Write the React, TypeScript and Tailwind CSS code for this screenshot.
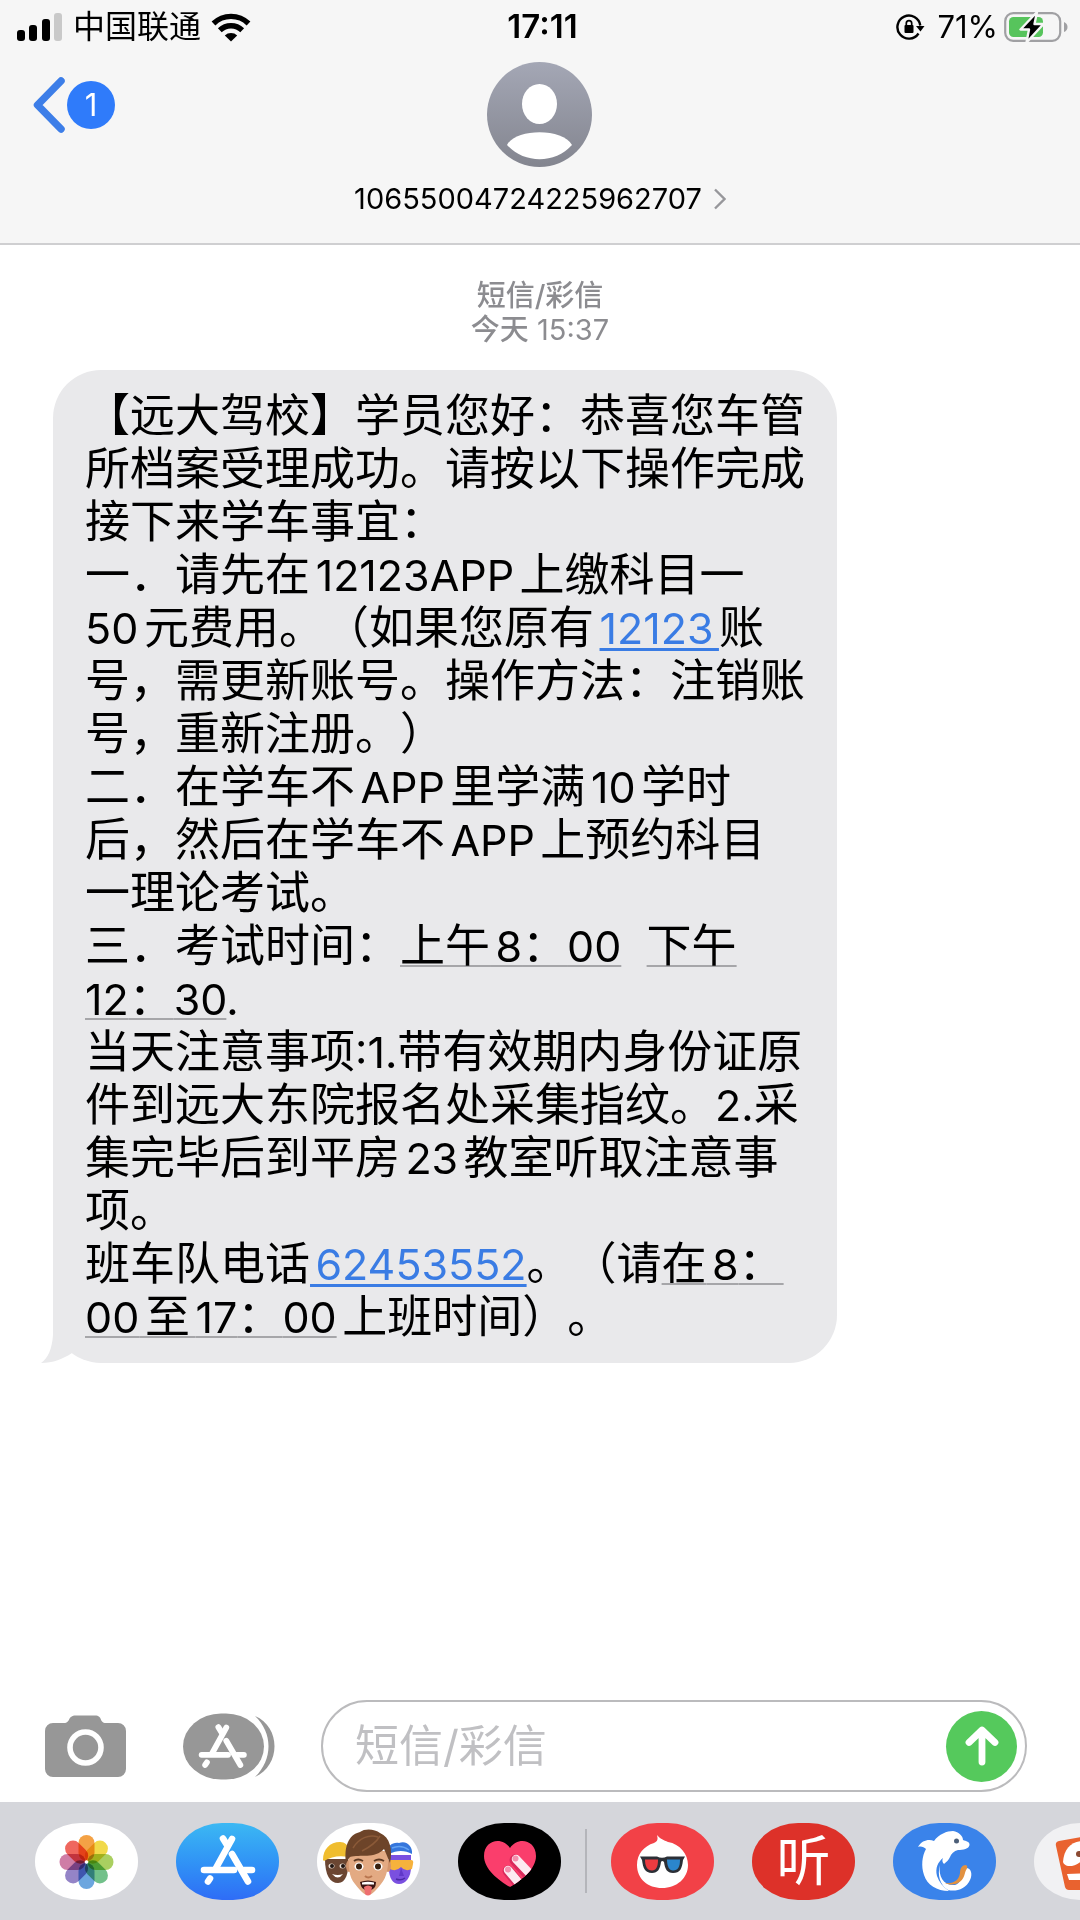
import type { ReactNode } from "react";

const PETALS = [
	"#f39a35",
	"#f0d63a",
	"#a3cb52",
	"#66bc80",
	"#5f9fdd",
	"#8b79c2",
	"#cb729f",
	"#ee5a50",
];

function SignalIcon() {
	return (
		<svg width="46" height="30" viewBox="0 0 46 30">
			<rect x="0" y="18" width="8" height="11" rx="3" />
			<rect x="12" y="13" width="8" height="16" rx="3" />
			<rect x="25" y="7" width="8" height="22" rx="3" />
			<rect x="37" y="1" width="8" height="28" rx="3" fill="#c9c9c9" />
		</svg>
	);
}

function WifiIcon() {
	return (
		<svg width="40" height="30" viewBox="0 0 40 30" fill="none" stroke="#000" strokeWidth="5.4">
			<path d="M2.5 11.5 A25 25 0 0 1 37.500 11.500" />
			<path d="M8.800 18.300 A16 16 0 0 1 31.200 18.300" />
			<path d="M20 29.500 L13.800 23.500 A9 9 0 0 1 26.200 23.500 Z" fill="#000" stroke="none" />
		</svg>
	);
}

function LockRotationIcon() {
	return (
		<svg width="29" height="28" viewBox="0 0 29 28" fill="none" stroke="#000" strokeWidth="2.4">
			<path d="M24.300 12.500 A11.500 11.500 0 1 0 22.500 20.500" />
			<path d="M20 13 L28.500 13 L24.500 18.500 Z" fill="#000" stroke="none" />
			<rect x="8.500" y="12" width="9" height="8" rx="1" fill="#000" stroke="none" />
			<path d="M10.300 12.500 V10.300 a2.700 2.700 0 0 1 5.400 0 V12.500" strokeWidth="1.700" />
		</svg>
	);
}

function BatteryIcon() {
	return (
		<svg width="64" height="32" viewBox="0 0 64 32">
			<rect x="1.200" y="2.200" width="55" height="27.600" rx="8" fill="none" stroke="#a0a0a3" strokeWidth="2.200" />
			<rect x="5" y="6" width="34" height="20" rx="4.500" fill="#57c45c" />
			<path d="M60 11 q3.500 1.500 3.500 5 t-3.500 5 Z" fill="#a0a0a3" />
			<path
				d="M33 1 L16.500 18.500 H25 L22.500 31.500 L39.500 13 H30.500 Z"
				fill="#000"
				stroke="#f6f6f6"
				strokeWidth="2.400"
				strokeLinejoin="round"
			/>
		</svg>
	);
}

function AvatarIcon() {
	return (
		<svg width="105" height="105" viewBox="0 0 105 105">
			<defs>
				<linearGradient id="avatar" x1="0" y1="0" x2="0" y2="1">
					<stop offset="0" stopColor="#a4a7b5" />
					<stop offset="1" stopColor="#83858f" />
				</linearGradient>
			</defs>
			<circle cx="52.500" cy="52.500" r="52.500" fill="url(#avatar)" />
			<ellipse cx="52.500" cy="42" rx="17.500" ry="20" fill="#fff" />
			<path d="M20 83 C29 66 76 66 85 83 C68 102 37 102 20 83 Z" fill="#fff" />
		</svg>
	);
}

function CameraIcon() {
	return (
		<svg width="81" height="63" viewBox="0 0 81 63">
			<path
				d="M8 8 H19 C26 8 22 0.500 31 0.500 H50 C58 0.500 54 8 61 8 H73 a8 8 0 0 1 8 8 V54 a8 8 0 0 1 -8 8 H8 a8 8 0 0 1 -8 -8 V16 a8 8 0 0 1 8 -8 Z"
				fill="#979797"
			/>
			<circle cx="40.500" cy="32.500" r="15.500" fill="none" stroke="#fff" strokeWidth="5.600" />
		</svg>
	);
}

function AppStoreMark() {
	return (
		<g fill="none" stroke="#fff" strokeWidth="6.600" strokeLinecap="round">
			<path d="M56 16 L40 45" />
			<path d="M47 15.500 L51 22" />
			<path d="M56 31 L72 58.500" />
			<path d="M28 47 H58" />
			<path d="M68 47 H76" />
			<path d="M34 55.500 L32 58.500" />
		</g>
	);
}

function AppDrawerIcon() {
	return (
		<svg width="92" height="67" viewBox="0 0 92 67">
			<path d="M72 3 C98 14 98 52 72 64 C90 46 90 20 72 3 Z" fill="#979797" />
			<rect x="0" y="0.500" width="81" height="66" rx="38" ry="33" fill="#979797" />
			<g transform="translate(-6 0.500) scale(0.880)">
				<AppStoreMark />
			</g>
		</svg>
	);
}

function Glyph({ children }: { children: ReactNode }) {
	return (
		<svg width="103" height="77" viewBox="0 0 103 77">
			{children}
		</svg>
	);
}

function PhotosIcon() {
	return (
		<Glyph>
			{PETALS.map((color, i) => (
				<rect
					key={color}
					x="43.500"
					y="12"
					width="16"
					height="26"
					rx="8"
					fill={color}
					className="mix-blend-multiply"
					opacity="0.920"
					transform={`rotate(${i * 45} 51.5 39)`}
				/>
			))}
			<circle cx="51.500" cy="39" r="1.800" fill="#fff" />
		</Glyph>
	);
}

function MemojiIcon() {
	return (
		<Glyph>
			<path d="M8 36 C8 52 13 60 21 60 C29 60 32 50 31 36 Z" fill="#6b4632" />
			<path d="M6 37 C6 26 13 19 23 19 C28 19 31 22 31 26 V34 C22 32 14 34 7 38 Z" fill="#f0bd2f" />
			<ellipse cx="14.500" cy="43" rx="3" ry="2.500" fill="#e9ddd2" />
			<ellipse cx="25.500" cy="43" rx="3" ry="2.500" fill="#e9ddd2" />
			<circle cx="15" cy="43" r="2" fill="#1f1410" />
			<circle cx="26" cy="43" r="2" fill="#1f1410" />
			<path d="M15 51 Q21 58 26 51 Q21 53 15 51 Z" fill="#fff" />

			<path d="M72 32 H94 V44 C94 54 89 61 82 61 C76 61 72 55 72 46 Z" fill="#7a50e0" />
			<path d="M70 32 C70 22 76 19 82 20 C90 17 96 24 95 31 C88 27 80 27 72 31 Z" fill="#3576dc" />
			<path d="M75 25 Q84 21 92 27" stroke="#63a3f3" strokeWidth="1.500" fill="none" />
			<path d="M72 37 H94 Q97 37 96 41 L95 46 Q88 49 84 44 Q78 50 72 45 Z" fill="#f6b23c" />
			<path d="M84 45 L82 53 H87 Z" fill="#6038c9" />
			<path d="M79 56 Q84 58 88 55" stroke="#4a2aa8" strokeWidth="1.500" fill="none" />

			<ellipse cx="32" cy="43" rx="3" ry="6" fill="#d3946b" />
			<ellipse cx="71" cy="43" rx="3" ry="6" fill="#d3946b" />
			<path d="M32 28 H71 C72 44 70 54 64 61 C58 69 54 72 51 72 C48 72 44 69 38 61 C32 54 31 44 32 28 Z" fill="#e3aa83" />
			<path
				d="M29 40 C27 24 31 12 43 9 C48 5 58 6 63 10 C73 14 76 27 73 40 C71 36 70 32 67 26 C58 36 43 31 33 34 C31 36 31 38 29 40 Z"
				fill="#6d4429"
			/>
			<path d="M36 25 C42 15 52 11 61 14 M45 28 C53 24 60 18 63 13" stroke="#8b5a38" strokeWidth="1.500" fill="none" />
			<path d="M37 38 Q41 35 46 38 M57 38 Q62 35 67 38" stroke="#5b3822" strokeWidth="2" fill="none" />
			<ellipse cx="42" cy="43.500" rx="4.500" ry="4" fill="#fff" />
			<ellipse cx="61" cy="43.500" rx="4.500" ry="4" fill="#fff" />
			<circle cx="42" cy="43.500" r="3" fill="#38200f" />
			<circle cx="61" cy="43.500" r="3" fill="#38200f" />
			<path d="M48 53 Q51 56 55 53" stroke="#b9764f" strokeWidth="2" fill="none" />
			<path d="M43 59 Q51 56 59 59 Q59 67 51 68 Q44 67 43 59 Z" fill="#3a1512" />
			<path d="M45 59.500 Q51 58 57 59.500 V61.500 H45 Z" fill="#fff" />
			<path d="M47 64 Q51 61 55 64 L54 71 Q51 74 48 71 Z" fill="#ee6f70" />
		</Glyph>
	);
}

function DigitalTouchIcon() {
	return (
		<Glyph>
			<defs>
				<clipPath id="heart">
					<path d="M52 64 C40 57 26 46 26 33 C26 17 44 13 52 25 C60 13 78 17 78 33 C78 46 64 57 52 64 Z" />
				</clipPath>
			</defs>
			<g clipPath="url(#heart)">
				<rect width="103" height="77" fill="#fa3e6c" />
				<path d="M57 37 L76 58 M50 48 L66 67" stroke="#d92a5c" strokeWidth="11" strokeLinecap="round" />
				<path d="M58 36 L77 56 M50 47 L66 66" stroke="#fdeaf1" strokeWidth="8.500" strokeLinecap="round" />
				<circle cx="57.500" cy="35.500" r="3" fill="#f48fae" />
				<circle cx="50" cy="46.500" r="3" fill="#f48fae" />
			</g>
		</Glyph>
	);
}

function MovieIcon() {
	return (
		<Glyph>
			<path
				d="M46 12 C49 16 53 17 57 19 C69 21 77 31 77 42 C77 55 66 65 51 65 C37 65 26 56 26 42 C26 31 33 23 43 20 C47 18 47 16 46 12 Z"
				fill="#fff"
			/>
			<path
				d="M29 33.500 H46 Q51 36 56 33.500 H74 L72 37 C71 46 69 50 62 50 C56 50 54 46 53 39 Q51 37 50 39 C49 46 47 50 41 50 C34 50 32 45 31 37 Z"
				fill="#2b2f36"
			/>
			<path d="M34 36.500 H47 C47 44 45 47.500 41 47.500 C36 47.500 34 43 34 36.500 Z" fill="#ed3b40" />
			<path d="M56 36.500 H69 C69 44 67 47.500 62 47.500 C58 47.500 56 43 56 36.500 Z" fill="#2b86cd" />
		</Glyph>
	);
}

function DolphinIcon() {
	return (
		<Glyph>
			<path
				d="M25 24 C29 17 36 16 41 18 C46 11 54 8 60 8 C66 9 70 13 70 17 C73 18 77 19 76.500 22 C76 26 70 27 65 27 C61 28 58 31 57 34 C56 37 53 39 51 41 C49 39 49 37 50 35 C45 39 42 45 44 53 C46 59 50 64 56 68 C44 68 34 62 31 52 C28 43 29 33 33 26 C31 24 28 23 25 24 Z"
				fill="#fff"
			/>
			<path
				d="M47 42 C45 54 51 63 62 62 C70 60 68 48 72 45 C78 44 80 51 77 57 C73 66 63 69 55 67 C47 62 44 52 47 42 Z"
				fill="#fff"
			/>
			<path d="M52 60 C61 61 66 57 67 50 C67 45 69 42 73 42 C76 44 73 46 72 50 C70 60 61 64 52 60 Z" fill="#e2913f" />
			<circle cx="63.500" cy="18" r="2.500" fill="#4d5f78" />
		</Glyph>
	);
}

function SogouIcon() {
	return (
		<Glyph>
			<path d="M25 18 L70 10 L76 67 H35 Q32 67 31 64 L22 23 Q21 19 25 18 Z" fill="#e9622f" />
			<path d="M29 39 C30 22 42 15 58 19 V26 C52 36 42 44 34 43 Q30 42 29 39 Z" fill="#fff" />
			<path d="M33 51 L58 50 V57 H35 Z" fill="#fff" />
			<circle cx="45" cy="31" r="3" fill="#8b4a32" />
		</Glyph>
	);
}

const appButton =
	"flex h-[77px] w-[103px] shrink-0 items-center justify-center overflow-hidden rounded-[46px/38px]";

function Latin({ children }: { children: ReactNode }) {
	return <span className="text-[43px]/none">{children}</span>;
}

function PhoneLink({ number }: { number: string }) {
	return (
		<a
			href={`tel:${number}`}
			className="text-[43px]/none text-[#3a7ce4] underline decoration-[3px] underline-offset-[4px] [text-decoration-skip-ink:none]">
			{number}
		</a>
	);
}

// detected dates get a thin grey underline, like the system data detectors
function DateText({ children }: { children: ReactNode }) {
	return (
		<span className="underline decoration-[#a6a6a9] decoration-2 underline-offset-[3px] [text-decoration-skip-ink:none]">
			{children}
		</span>
	);
}

function StatusBar() {
	return (
		<div className="grid h-[54px] grid-cols-3 items-center pr-3 pl-[17px] text-[31px]">
			<div className="flex items-center">
				<SignalIcon />
				<span className="ml-[10px] text-[32px]">中国联通</span>
				<span className="ml-[10px]">
					<WifiIcon />
				</span>
			</div>
			<div className="text-center text-[33px] font-semibold">17:11</div>
			<div className="flex items-center justify-end">
				<LockRotationIcon />
				<span className="mr-[6px] ml-3">71%</span>
				<BatteryIcon />
			</div>
		</div>
	);
}

function ChatHeader() {
	return (
		<header className="border-b-2 border-[#cfcfd1] bg-[#f6f6f6]">
			<StatusBar />
			<div className="grid grid-cols-[1fr_auto_1fr] items-start pt-2 pb-6">
				<button type="button" aria-label="返回" className="mt-[15px] ml-[33px] flex w-fit items-center">
					<svg width="32" height="56" viewBox="0 0 32 56" fill="none">
						<path
							d="M28 4 L4.500 28 L28 52"
							stroke="#3d7ee8"
							strokeWidth="7.500"
							strokeLinecap="round"
							strokeLinejoin="round"
						/>
					</svg>
					<span className="ml-[2px] flex size-12 items-center justify-center rounded-full bg-[#2f7bfa] text-[31px] text-white">
						1
					</span>
				</button>
				<button type="button" className="flex flex-col items-center">
					<AvatarIcon />
					<span className="mt-3 flex h-10 items-center gap-3 text-[29px]">
						10655004724225962707
						<svg width="12" height="22" viewBox="0 0 12 22" fill="none">
							<path d="M1 1.500 L10.500 11 L1 20.500" stroke="#97979b" strokeWidth="2.400" />
						</svg>
					</span>
				</button>
			</div>
		</header>
	);
}

function MessageBubble() {
	return (
		<div className="relative mt-[23px] ml-[53px] w-fit rounded-[48px] bg-[#e9e9eb] px-8 pt-[19px] pb-5">
			<svg className="absolute bottom-0 left-[-12px]" width="50" height="60" viewBox="0 0 50 60">
				<path d="M12 0 V32 C11 46 7 55 0 60 C12 60 22 56 31 50 L50 50 V0 Z" fill="#e9e9eb" />
			</svg>
			<p className="relative text-[45px]/[53px] whitespace-nowrap [text-autospace:normal] [text-spacing-trim:space-all]">
				【远大驾校】学员您好：恭喜您车管
				<br />
				所档案受理成功。请按以下操作完成
				<br />
				接下来学车事宜：
				<br />
				一．请先在<Latin>12123APP</Latin>上缴科目一
				<br />
				<Latin>50</Latin>元费用。（如果您原有<PhoneLink number="12123" />账
				<br />
				号，需更新账号。操作方法：注销账
				<br />
				号，重新注册。）
				<br />
				二．在学车不<Latin>APP</Latin>里学满<Latin>10</Latin>学时
				<br />
				后，然后在学车不<Latin>APP</Latin>上预约科目
				<br />
				一理论考试。
				<br />
				三．考试时间：
				<DateText>
					上午<Latin>8</Latin>：<Latin>00</Latin>
				</DateText>
				&nbsp;&nbsp;
				<DateText>下午</DateText>
				<br />
				<DateText>
					<Latin>12</Latin>：<Latin>30</Latin>
				</DateText>
				<Latin>.</Latin>
				<br />
				当天注意事项<Latin>:1.</Latin>带有效期内身份证原
				<br />
				件到远大东院报名处采集指纹。<Latin>2.</Latin>采
				<br />
				集完毕后到平房<Latin>23</Latin>教室听取注意事
				<br />
				项。
				<br />
				班车队电话
				<PhoneLink number="62453552" />
				。（请
				<DateText>
					在<Latin>8</Latin>：
				</DateText>
				<br />
				<DateText>
					<Latin>00</Latin>至<Latin>17</Latin>：<Latin>00</Latin>
				</DateText>
				上班时间）。
			</p>
		</div>
	);
}

function Composer() {
	return (
		<form className="flex items-center pr-[53px] pb-[10px] pl-[45px]">
			<button type="button" aria-label="相机">
				<CameraIcon />
			</button>
			<button type="button" aria-label="App 抽屉" className="ml-[57px]">
				<AppDrawerIcon />
			</button>
			<div className="ml-[46px] flex h-[92px] min-w-0 flex-1 items-center rounded-full border-2 border-[#bbbbbd] pr-2 pl-8">
				<input
					type="text"
					aria-label="短信/彩信"
					placeholder="短信/彩信"
					className="min-w-0 flex-1 bg-transparent text-[44px] outline-none placeholder:text-[#c0c0c3]"
				/>
				<button
					type="button"
					aria-label="发送"
					className="flex size-[71px] shrink-0 items-center justify-center rounded-full bg-[#55c95c]">
					<svg width="36" height="42" viewBox="0 0 36 42" fill="none">
						<path
							d="M18 37 V6 M5 17.500 L18 5 L31 17.500"
							stroke="#fff"
							strokeWidth="6.800"
							strokeLinecap="round"
							strokeLinejoin="round"
						/>
					</svg>
				</button>
			</div>
		</form>
	);
}

function AppStrip() {
	return (
		<nav className="flex h-[118px] items-center gap-[38px] overflow-hidden bg-[#d5d6db] pl-[35px]">
			<button type="button" aria-label="照片" className={`${appButton} bg-white`}>
				<PhotosIcon />
			</button>
			<button type="button" aria-label="App Store" className={`${appButton} bg-linear-to-b from-[#3cb8f3] to-[#2f6cf6]`}>
				<Glyph>
					<AppStoreMark />
				</Glyph>
			</button>
			<button type="button" aria-label="拟我表情" className={`${appButton} bg-white`}>
				<MemojiIcon />
			</button>
			<div className="flex shrink-0 items-center gap-6">
				<button type="button" aria-label="Digital Touch" className={`${appButton} bg-black`}>
					<DigitalTouchIcon />
				</button>
				<div className="h-16 w-[2px] bg-[#b4b5ba]" />
				<button type="button" aria-label="电影" className={`${appButton} bg-[#f24147]`}>
					<MovieIcon />
				</button>
			</div>
			<button type="button" className={`${appButton} bg-[#dd3129] text-[54px] text-white`}>
				听
			</button>
			<button type="button" aria-label="旅行" className={`${appButton} bg-[#3a83ea]`}>
				<DolphinIcon />
			</button>
			<button type="button" aria-label="输入法" className={`${appButton} bg-[#f1f1f3]`}>
				<SogouIcon />
			</button>
		</nav>
	);
}

export default function App() {
	return (
		<div className="flex min-h-screen flex-col overflow-hidden bg-white font-['Inter','Noto_Sans_CJK_SC',sans-serif] text-black">
			<ChatHeader />
			<main className="flex-1 pt-[34px]">
				<div className="text-center text-[29px]/[34px] text-[#8c8c90]">
					<div className="font-medium">短信/彩信</div>
					<div>
						<span className="font-medium">今天</span> 15:37
					</div>
				</div>
				<MessageBubble />
			</main>
			<footer>
				<Composer />
				<AppStrip />
			</footer>
		</div>
	);
}
